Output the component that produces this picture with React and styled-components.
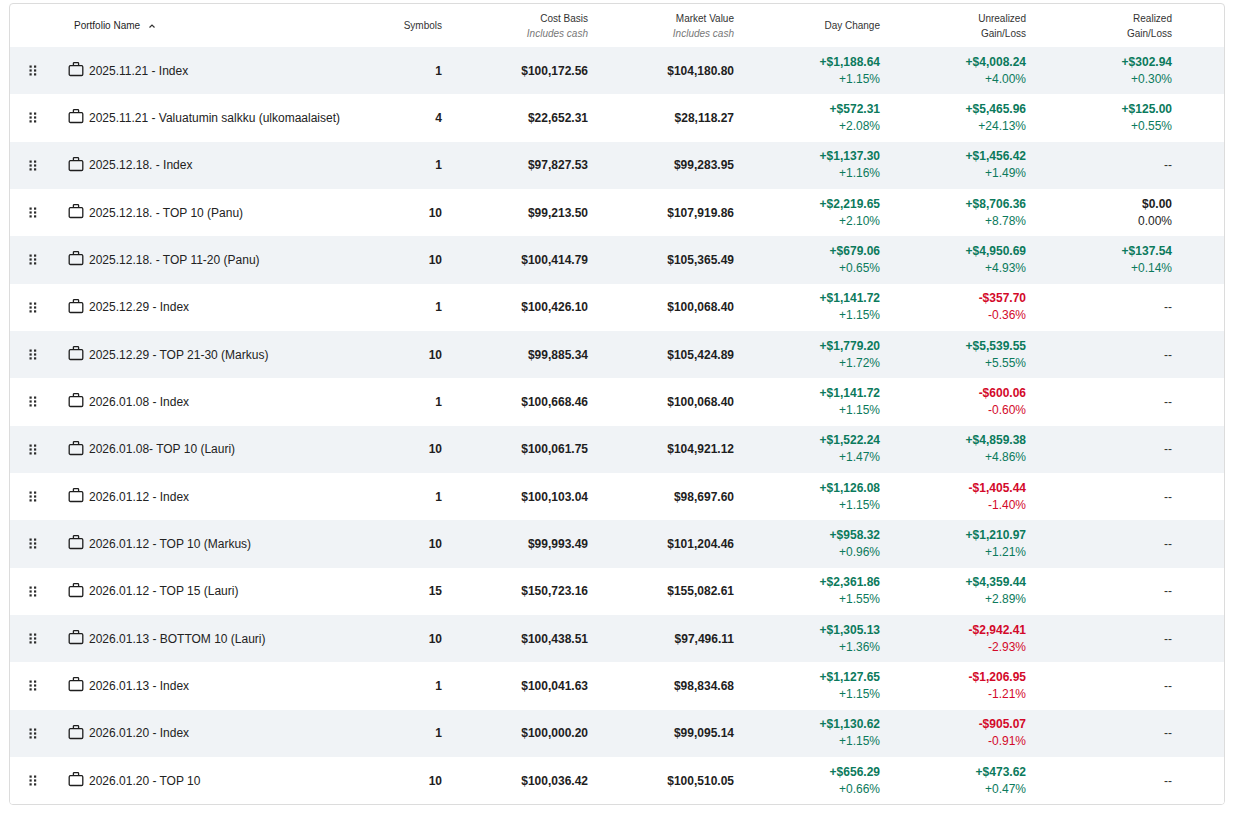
import React from 'react';
import styled, { createGlobalStyle } from 'styled-components';

const GlobalStyle = createGlobalStyle`
  body {
    margin: 0;
    background: #ffffff;
    font-family: 'Liberation Sans', Arial, sans-serif;
    color: #1e1e1e;
  }
`;

const rows = [
  { name: '2025.11.21 - Index', symbols: '1', cost: '$100,172.56', market: '$104,180.80', day: ['+$1,188.64', '+1.15%'], unreal: ['+$4,008.24', '+4.00%'], real: ['+$302.94', '+0.30%'] },
  { name: '2025.11.21 - Valuatumin salkku (ulkomaalaiset)', symbols: '4', cost: '$22,652.31', market: '$28,118.27', day: ['+$572.31', '+2.08%'], unreal: ['+$5,465.96', '+24.13%'], real: ['+$125.00', '+0.55%'] },
  { name: '2025.12.18. - Index', symbols: '1', cost: '$97,827.53', market: '$99,283.95', day: ['+$1,137.30', '+1.16%'], unreal: ['+$1,456.42', '+1.49%'], real: null },
  { name: '2025.12.18. - TOP 10 (Panu)', symbols: '10', cost: '$99,213.50', market: '$107,919.86', day: ['+$2,219.65', '+2.10%'], unreal: ['+$8,706.36', '+8.78%'], real: ['$0.00', '0.00%'] },
  { name: '2025.12.18. - TOP 11-20 (Panu)', symbols: '10', cost: '$100,414.79', market: '$105,365.49', day: ['+$679.06', '+0.65%'], unreal: ['+$4,950.69', '+4.93%'], real: ['+$137.54', '+0.14%'] },
  { name: '2025.12.29 - Index', symbols: '1', cost: '$100,426.10', market: '$100,068.40', day: ['+$1,141.72', '+1.15%'], unreal: ['-$357.70', '-0.36%'], real: null },
  { name: '2025.12.29 - TOP 21-30 (Markus)', symbols: '10', cost: '$99,885.34', market: '$105,424.89', day: ['+$1,779.20', '+1.72%'], unreal: ['+$5,539.55', '+5.55%'], real: null },
  { name: '2026.01.08 - Index', symbols: '1', cost: '$100,668.46', market: '$100,068.40', day: ['+$1,141.72', '+1.15%'], unreal: ['-$600.06', '-0.60%'], real: null },
  { name: '2026.01.08- TOP 10 (Lauri)', symbols: '10', cost: '$100,061.75', market: '$104,921.12', day: ['+$1,522.24', '+1.47%'], unreal: ['+$4,859.38', '+4.86%'], real: null },
  { name: '2026.01.12 - Index', symbols: '1', cost: '$100,103.04', market: '$98,697.60', day: ['+$1,126.08', '+1.15%'], unreal: ['-$1,405.44', '-1.40%'], real: null },
  { name: '2026.01.12 - TOP 10 (Markus)', symbols: '10', cost: '$99,993.49', market: '$101,204.46', day: ['+$958.32', '+0.96%'], unreal: ['+$1,210.97', '+1.21%'], real: null },
  { name: '2026.01.12 - TOP 15 (Lauri)', symbols: '15', cost: '$150,723.16', market: '$155,082.61', day: ['+$2,361.86', '+1.55%'], unreal: ['+$4,359.44', '+2.89%'], real: null },
  { name: '2026.01.13 - BOTTOM 10 (Lauri)', symbols: '10', cost: '$100,438.51', market: '$97,496.11', day: ['+$1,305.13', '+1.36%'], unreal: ['-$2,942.41', '-2.93%'], real: null },
  { name: '2026.01.13 - Index', symbols: '1', cost: '$100,041.63', market: '$98,834.68', day: ['+$1,127.65', '+1.15%'], unreal: ['-$1,206.95', '-1.21%'], real: null },
  { name: '2026.01.20 - Index', symbols: '1', cost: '$100,000.20', market: '$99,095.14', day: ['+$1,130.62', '+1.15%'], unreal: ['-$905.07', '-0.91%'], real: null },
  { name: '2026.01.20 - TOP 10', symbols: '10', cost: '$100,036.42', market: '$100,510.05', day: ['+$656.29', '+0.66%'], unreal: ['+$473.62', '+0.47%'], real: null },
];

const tone = (v) => (v.startsWith('+') ? 'up' : v.startsWith('-') ? 'down' : 'flat');

const DragIcon = () => (
  <svg width="8" height="11" viewBox="0 0 8 11" fill="#2b2b2b">
    <rect x="0.5" y="0.5" width="2.2" height="2.2" />
    <rect x="5" y="0.5" width="2.2" height="2.2" />
    <rect x="0.5" y="4.4" width="2.2" height="2.2" />
    <rect x="5" y="4.4" width="2.2" height="2.2" />
    <rect x="0.5" y="8.3" width="2.2" height="2.2" />
    <rect x="5" y="8.3" width="2.2" height="2.2" />
  </svg>
);

const BriefcaseIcon = () => (
  <svg width="16" height="16" viewBox="0 0 16 16" fill="none" stroke="#1e1e1e" strokeWidth="1.3">
    <rect x="1.2" y="4.7" width="13.6" height="9.8" rx="1.2" />
    <path d="M5.4 4.7V2.4c0-.5.3-.8.8-.8h3.6c.5 0 .8.3.8.8v2.3" />
  </svg>
);

const Caret = () => (
  <svg width="8" height="6" viewBox="0 0 8 6" fill="none" stroke="#333" strokeWidth="1.2">
    <path d="M1.5 4.5L4 2l2.5 2.5" />
  </svg>
);

const App = () => (
  <Page>
    <GlobalStyle />
    <Card>
      <HeadRow>
        <HeadCell />
        <NameHead>
          Portfolio Name <Caret />
        </NameHead>
        <HeadCell $right>Symbols</HeadCell>
        <HeadCell $right>
          Cost Basis
          <Sub>Includes cash</Sub>
        </HeadCell>
        <HeadCell $right>
          Market Value
          <Sub>Includes cash</Sub>
        </HeadCell>
        <HeadCell $right>Day Change</HeadCell>
        <HeadCell $right>
          Unrealized
          <br />
          Gain/Loss
        </HeadCell>
        <HeadCell $right>
          Realized
          <br />
          Gain/Loss
        </HeadCell>
        <HeadCell />
      </HeadRow>
      {rows.map((r, i) => (
        <Row key={r.name} $shaded={i % 2 === 0}>
          <DragCell>
            <DragIcon />
          </DragCell>
          <NameCell>
            <BriefcaseIcon />
            <span>{r.name}</span>
          </NameCell>
          <NumCell>{r.symbols}</NumCell>
          <NumCell>{r.cost}</NumCell>
          <NumCell>{r.market}</NumCell>
          <ChangeCell $tone={tone(r.day[0])}>
            <b>{r.day[0]}</b>
            <span>{r.day[1]}</span>
          </ChangeCell>
          <ChangeCell $tone={tone(r.unreal[0])}>
            <b>{r.unreal[0]}</b>
            <span>{r.unreal[1]}</span>
          </ChangeCell>
          {r.real ? (
            <ChangeCell $tone={tone(r.real[0])}>
              <b>{r.real[0]}</b>
              <span>{r.real[1]}</span>
            </ChangeCell>
          ) : (
            <EmptyCell>--</EmptyCell>
          )}
          <div />
        </Row>
      ))}
    </Card>
  </Page>
);

export default App;

const Page = styled.div`
  padding: 3px 9px 8px 9px;
`;

const Card = styled.div`
  border: 1px solid #dcdcdc;
  border-radius: 4px;
  overflow: hidden;
  background: #fff;
`;

const cols = '44px minmax(0, 1fr) repeat(6, 146px) 36px';

const HeadRow = styled.div`
  display: grid;
  grid-template-columns: ${cols};
  height: 43px;
  align-items: center;
`;

const HeadCell = styled.div`
  padding: 0 16px;
  font-size: 10px;
  line-height: 15px;
  color: #333;
  text-align: ${(p) => (p.$right ? 'right' : 'left')};
`;

const NameHead = styled.div`
  padding-left: 20px;
  font-size: 10px;
  color: #1e1e1e;
  display: flex;
  align-items: center;
  gap: 8px;
`;

const Sub = styled.div`
  font-style: italic;
  color: #777;
`;

const Row = styled.div`
  display: grid;
  grid-template-columns: ${cols};
  height: 47.33px;
  align-items: center;
  background: ${(p) => (p.$shaded ? '#f0f3f6' : '#fff')};
`;

const DragCell = styled.div`
  display: flex;
  justify-content: center;
  padding-left: 1px;
`;

const NameCell = styled.div`
  display: flex;
  align-items: center;
  gap: 5px;
  padding-left: 14px;
  font-size: 12px;
  color: #222;
  white-space: nowrap;
  min-width: 0;

  svg {
    flex: none;
    margin-top: -3px;
  }
`;

const NumCell = styled.div`
  padding: 0 16px;
  text-align: right;
  font-size: 12px;
  font-weight: bold;
  color: #1e1e1e;
`;

const toneColor = {
  up: '#0b7a5c',
  down: '#d3092a',
  flat: '#1e1e1e',
};

const ChangeCell = styled.div`
  padding: 0 16px;
  display: flex;
  flex-direction: column;
  align-items: flex-end;
  font-size: 12px;
  line-height: 17px;
  color: ${(p) => toneColor[p.$tone]};

  b {
    font-weight: bold;
  }
`;

const EmptyCell = styled.div`
  padding: 0 16px;
  text-align: right;
  font-size: 12px;
  color: #333;
`;
